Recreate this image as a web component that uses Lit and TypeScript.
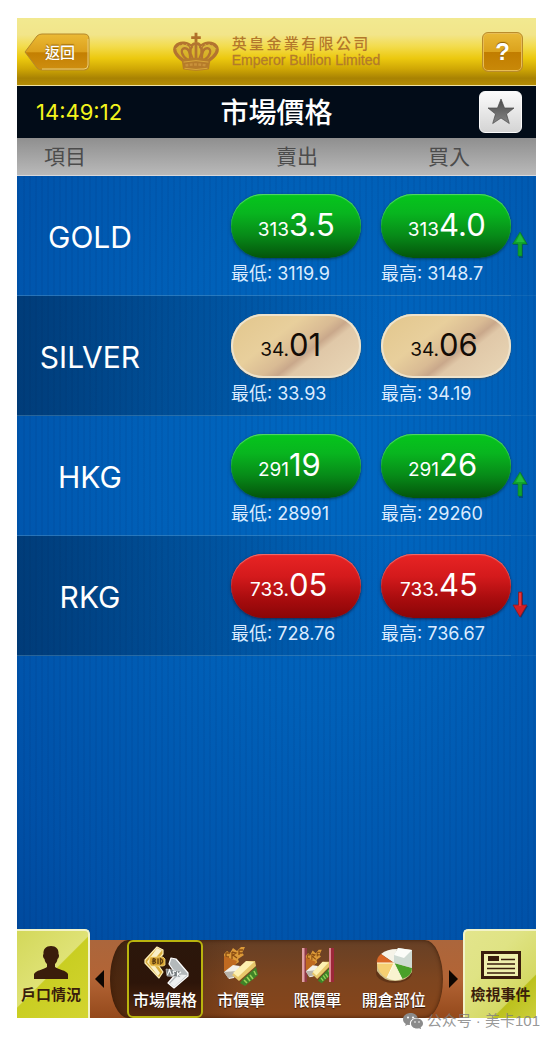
import { LitElement, html, css, svg } from "lit";
import { customElement, property } from "lit/decorators.js";

type Trend = "up" | "down" | "flat";

interface Quote {
  name: string;
  sell: [string, string];
  buy: [string, string];
  low: string;
  high: string;
  trend: Trend;
}

const QUOTES: Quote[] = [
  { name: "GOLD", sell: ["313", "3.5"], buy: ["313", "4.0"], low: "3119.9", high: "3148.7", trend: "up" },
  { name: "SILVER", sell: ["34.", "01"], buy: ["34.", "06"], low: "33.93", high: "34.19", trend: "flat" },
  { name: "HKG", sell: ["291", "19"], buy: ["291", "26"], low: "28991", high: "29260", trend: "up" },
  { name: "RKG", sell: ["733.", "05"], buy: ["733.", "45"], low: "728.76", high: "736.67", trend: "down" },
];

const crown = html`<svg class="crown" viewBox="0 0 48 40" width="46" height="40" aria-hidden="true">
  <path d="M10 29C3 24 0 18 3 13c4-5 12-4 17-1h8c5-3 13-4 17 1c3 5 0 11-7 16z" fill="#c79a2c" opacity=".55"/>
  <path d="M22.500 0h3v3.500H29v3h-3.500V10h-3V6.500H19v-3h3.500z" fill="#b0702a"/>
  <g fill="none" stroke="#b37430" stroke-linecap="round">
    <path d="M11 29C3 24 0 18 3 14c4-5 13-4 16 1M37 29c8-5 11-11 8-15c-4-5-13-4-16 1" stroke-width="3.400"/>
    <path d="M15 28c-6-4-8-11-3-12c5 0 6 6 6 12M33 28c6-4 8-11 3-12c-5 0-6 6-6 12" stroke-width="2.400"/>
    <path d="M18 20c0-6 2-9 6-9s6 3 6 9M24 13v15" stroke-width="2.800"/>
    <path d="M18 20l3 8M30 20l-3 8" stroke-width="2"/>
  </g>
  <path d="M3 17c4-6 12-6 16-2M45 17c-4-6-12-6-16-2" fill="none" stroke="#d9b040" stroke-width="1" stroke-dasharray="1.500 2.500"/>
  <path d="M9 28q15-4 30 0l-1.500 10q-13.500 3-27 0z" fill="#b57b2a"/>
  <path d="M11 30.500q13-3 26 0M12 37q12 2.500 24 0" fill="none" stroke="#d9a93c" stroke-width="1"/>
  <path d="M13 34q11-2 22 0" fill="none" stroke="#c9913a" stroke-width="2.500" stroke-dasharray="3 1.500"/>
</svg>`;

const star = html`<svg viewBox="0 0 28 28" width="28" height="28" aria-hidden="true">
  <defs><linearGradient id="sg" x1="0" y1="0" x2="0" y2="1">
    <stop offset="0" stop-color="#4c4c4c"/><stop offset="1" stop-color="#858585"/>
  </linearGradient></defs>
  <path d="M14 1l3.500 9h9.500l-7.500 6 2.800 9.500L14 20l-8.300 5.500L8.500 16 1 10h9.500z" fill="url(#sg)" stroke="#4a4a4a" stroke-width=".7"/>
</svg>`;

const trendArrow = (trend: Trend) =>
  trend === "flat"
    ? html``
    : html`<svg class="trend" viewBox="0 0 18 28" width="18" height="28" role="img" aria-label=${trend === "up" ? "升" : "跌"}>
        ${trend === "up"
          ? svg`<path d="M10 2l7 12h-5v13h-4V14H2z" fill="#013f55" opacity=".55"/>
              <path d="M9 1l7 12h-5v12H7V13H1.500z" fill="#10a42c" stroke="#087a2a" stroke-width=".6"/>
              <path d="M9 3l4.500 8H5z" fill="#22bd3c"/>`
          : svg`<path d="M8 2h4v13h5l-7 12-7-12h5z" fill="#12264f" opacity=".6"/>
              <path d="M7.500 1h3.500v13h5L9 26 2 14h5.500z" fill="#d21f24" stroke="#8b1420" stroke-width=".7"/>
              <path d="M9 2v13" stroke="#f0545a" stroke-width="1"/>`}
      </svg>`;

const bidAskIcon = html`<svg viewBox="0 0 48 44" width="48" height="44" aria-hidden="true">
  <path d="M16 2l6 3v4l-7 8 7 10-4 6L4 18v-3z" fill="#d9ae3f" stroke="#fff0b8" stroke-width="1.200" stroke-linejoin="round"/>
  <path d="M16 3l5 2.500L11 17l8 11-2 3L6 17z" fill="#f8efc8"/>
  <path d="M9 12h13l2 2v6l-2 1H10l-2-3z" fill="#d6a332" stroke="#f6dd86" stroke-width=".8"/>
  <path d="M12 13.500v5.500M12 13.500q4.500 1 .5 2.700q4.500 1-.5 2.800M17 13.500v5.500M19.500 13.500q4.500 2.700 0 5.500z" fill="none" stroke="#5e3d10" stroke-width="1.300"/>
  <path d="M30 13l5 1 12 14v3L33 43l-6-5 8-9-7-10z" fill="#b4b9bb" stroke="#fff" stroke-width="1.200" stroke-linejoin="round"/>
  <path d="M46 30L33 42l-4-3.500 9-9z" fill="#eef0f0"/>
  <path d="M25 24l14 2 1 6-14-1z" fill="#777d80" stroke="#d7dada" stroke-width=".6"/>
  <path d="M26.500 30l2-5 2 5.500M35 26.500q-4-1-2.500 1.200t-1.500 2.500M36.500 26.500v5M40 27l-3 2 3 2.500" fill="none" stroke="#f6f8f8" stroke-width="1.200"/>
</svg>`;

const orderShape = svg`
  <path d="M5 9l3-3 3 2 3-5 4 3 4-4h4l-3 6 2 2-6 4 1 3-14 9z" fill="#dc9a38"/>
  <path d="M7 8v7M7 8h4M7 12h3M13 7v7M13 7l4 1-3 2 4 3M20 5v5M20 5h4M20 8h3" fill="none" stroke="#8a4d12" stroke-width="1.300"/>
  <path d="M5 11l13 5-4 9-9 1z" fill="#c06a20"/>
  <path d="M5 27l9-7 7 1-6 12-5 1z" fill="#f2f0e9"/>
  <path d="M5 27l4 6 6-1 3-6z" fill="#b8b4aa"/>
  <path d="M13 30l15-14h8l1 5-17 15z" fill="#e7c76a"/>
  <path d="M14 28l13-12 8 1-16 15z" fill="#fdf0b1"/>
  <path d="M24 34l13-12 2 8-13 11-5-3z" fill="#3f8428"/>
  <path d="M25 35l3 3M28 32l3 4M31 30l3 4M35 26l2 4" stroke="#9bd058" stroke-width="1.600"/>`;

const marketOrderIcon = html`<svg viewBox="0 0 44 44" width="44" height="44" aria-hidden="true">${orderShape}</svg>`;

const limitOrderIcon = html`<svg viewBox="0 0 44 44" width="44" height="44" aria-hidden="true">
  <path d="M6 3h5v34H6z" fill="#8f3944"/><path d="M6 3h2.500v34H6z" fill="#df9fa4"/>
  <g transform="translate(6 3) scale(.76 .86)">${orderShape}</g>
  <path d="M33 3h5v34h-5z" fill="#9c2739"/><path d="M33 3h2v34h-2z" fill="#dc8790"/>
</svg>`;

const pieIcon = html`<svg viewBox="0 0 44 44" width="44" height="44" aria-hidden="true">
  <ellipse cx="22" cy="28" rx="18" ry="10" fill="#4f2a12" opacity=".6"/>
  <path d="M5 18v8q6 10 18 10t17-9v-9z" fill="#cfc08a"/>
  <path d="M22 18L9 9q6-5 16-5z" fill="#f5f3e8"/>
  <path d="M22 18L5 18q-1-5 4-9z" fill="#d96826"/>
  <path d="M22 18l-7 15Q6 29 5 18z" fill="#f5cf72"/>
  <path d="M22 18l8 16q-8 3-15-1z" fill="#f9f3d0"/>
  <path d="M22 18l18 5q0 8-10 11z" fill="#4aa02a"/>
  <path d="M22 10l4-7 14 2v18l-18-5z" fill="#cfdad3"/>
  <path d="M22 10l4-7 14 2-8 8z" fill="#fbfcf8"/>
  <path d="M22 18L5 18M22 18l-7 15M22 18l8 16" stroke="#fffbe2" stroke-width="1"/>
</svg>`;

const personIcon = html`<svg viewBox="0 0 36 36" width="36" height="36" aria-hidden="true">
  <path d="M18 1c5 0 8 3 7.500 8 1 1 .5 4-1 5-.5 3-1.500 4-2.500 5v3c4 3 11 3 13 7v5H1v-5c2-4 9-4 13-7v-3c-1-1-2-2-2.500-5-1.500-1-2-4-1-5C10 4 13 1 18 1z" fill="#3a1d0b"/>
</svg>`;

const newsIcon = html`<svg viewBox="0 0 40 28" width="40" height="28" aria-hidden="true">
  <path d="M1.500 1.500h37v25h-37z" fill="#efefac" stroke="#3a1d0b" stroke-width="3"/>
  <path d="M7 5h11v5H7z" fill="#3a1d0b"/>
  <path d="M20 8.500h14M6 13h28M6 17.500h28M6 22h28" stroke="#3a1d0b" stroke-width="1.600"/>
</svg>`;

@customElement("brand-header")
export class BrandHeader extends LitElement {
  static styles = css`
    :host {
      display: grid;
      grid-template-columns: 1fr auto 1fr;
      align-items: center;
      height: 68px;
      box-sizing: border-box;
      padding: 0 13px 0 7px;
      border-bottom: 1px solid #efe2a0;
      background: linear-gradient(#f2e990 0%, #f2e58a 25%, #f3dc4e 42%, #ecc90f 60%, #cfa705 76%, #a88203 90%, #b48d05 100%);
    }
    button {
      border: 0;
      padding: 0;
      font: inherit;
      color: #fff;
      cursor: pointer;
    }
    .back {
      position: relative;
      width: 66px;
      height: 38px;
      background: none;
      font-size: 15px;
      font-weight: 500;
      text-shadow: 0 -1px 1px #8a5a00;
    }
    .shape {
      position: absolute;
      inset: 0;
    }
    .label {
      position: relative;
      padding-left: 6px;
    }
    .brand {
      display: flex;
      align-items: center;
      gap: 13px;
      padding-left: 6px;
      color: #b3782c;
    }
    .zh {
      padding-right: 12px;
      font-size: 15px;
      line-height: 17px;
      font-weight: 500;
      text-align-last: justify;
    }
    .en {
      font: 14px/16px "Liberation Sans", Arial, sans-serif;
      -webkit-text-stroke: 0.3px #b3802a;
    }
    .help {
      justify-self: end;
      width: 41px;
      height: 40px;
      border: 1px solid #b98c2c;
      border-radius: 6px;
      background: linear-gradient(#e9b936, #dba21c 50%, #c17d00 51%, #c98909);
      box-shadow: inset 0 0 0 1px #e8bd55;
      font: bold 24px/36px "Liberation Sans", Arial, sans-serif;
      text-shadow: 0 -1px 1px #8a5a00;
    }
  `;
  render() {
    return html`
      <button class="back">
        <svg class="shape" viewBox="0 0 66 38" width="66" height="38" aria-hidden="true">
          <defs>
            <linearGradient id="bg" x1="0" y1="0" x2="0" y2="1">
              <stop offset="0" stop-color="#ebba35" /><stop offset=".5" stop-color="#dca01c" />
              <stop offset=".52" stop-color="#c37f02" /><stop offset="1" stop-color="#cf8f10" />
            </linearGradient>
          </defs>
          <path d="M1 19L13 3q2-2 5-2h42q5 0 5 5v26q0 5-5 5H18q-3 0-5-2z" fill="url(#bg)" stroke="#b4882a" />
          <path d="M18 36h42q4 0 4-4V6" fill="none" stroke="#e9cf7a" />
        </svg>
        <span class="label">返回</span>
      </button>
      <div class="brand">
        ${crown}
        <div>
          <div class="zh">英皇金業有限公司</div>
          <div class="en">Emperor Bullion Limited</div>
        </div>
      </div>
      <button class="help" aria-label="說明">?</button>
    `;
  }
}

@customElement("price-table")
export class PriceTable extends LitElement {
  @property({ attribute: false }) quotes: Quote[] = [];

  static styles = css`
    :host {
      display: block;
    }
    table {
      width: 100%;
      table-layout: fixed;
      border-collapse: separate;
      border-spacing: 0;
    }
    .col-sell {
      width: 150px;
    }
    .col-buy {
      width: 130px;
    }
    .col-trend {
      width: 25px;
    }
    th,
    td {
      padding: 0;
    }
    thead th {
      height: 37px;
      border-bottom: 1px solid #d9d9dc;
      background: linear-gradient(#8f8f8f, #b9b9b9);
      color: #4c4c4c;
      font-size: 21px;
      line-height: 36px;
      font-weight: 400;
    }
    thead .item {
      padding-left: 27px;
      text-align: left;
    }
    thead .sell {
      padding-right: 18px;
    }
    thead .buy {
      padding-left: 6px;
    }
    tbody tr {
      height: 120px;
    }
    tbody tr:nth-child(even) {
      background: linear-gradient(90deg, rgba(0, 30, 60, 0.46), rgba(0, 30, 60, 0.28) 28%, rgba(0, 30, 60, 0) 72%);
    }
    tbody th,
    tbody td {
      box-sizing: border-box;
      height: 120px;
      border-bottom: 1px solid rgba(100, 160, 200, 0.4);
    }
    tbody td:last-child {
      border-color: rgba(100, 160, 200, 0.15);
    }
    .name {
      padding: 2px 68px 0 0;
      color: #fff;
      font-size: 30px;
      font-weight: 400;
    }
    td {
      vertical-align: top;
    }
    .quote {
      padding-top: 18px;
    }
    .pill {
      display: grid;
      grid-template-columns: 58px 1fr;
      align-items: baseline;
      width: 130px;
      height: 64px;
      box-sizing: border-box;
      padding: 0;
      border: 0;
      border-radius: 32px;
      font: inherit;
      line-height: 62px;
      color: #fff;
      cursor: pointer;
    }
    .up {
      background: linear-gradient(#05c61c, #08b51f 30%, #078a18 65%, #04540b);
      box-shadow: inset 0 1px 1px #56d968, 0 1px 3px #003a5c;
    }
    .down {
      background: linear-gradient(#e82424, #d41a1c 35%, #a80c0e 70%, #8a0507);
      box-shadow: inset 0 1px 1px #f07070, 0 1px 3px #16224a;
    }
    .flat {
      background: linear-gradient(142deg, #e2c68c, #e8cf9c 35%, #d9bb94 52%, #c9a88b 59%, #e0c8a8 65%, #ead8b8);
      box-shadow: inset 0 0 0 2px #eee3cc, 0 1px 2px #33506b;
      color: #120b06;
    }
    .minor {
      text-align: right;
      font-size: 19px;
    }
    .major {
      text-align: left;
      font-size: 31px;
    }
    .range {
      margin-top: 3px;
      font-size: 18px;
      line-height: 25px;
      color: #dcecff;
      white-space: nowrap;
    }
    .trend-cell {
      padding-top: 55px;
    }
    .trend {
      display: block;
    }
  `;

  private price([minor, major]: [string, string], trend: Trend) {
    return html`<button class="pill ${trend}"><span class="minor">${minor}</span><span class="major">${major}</span></button>`;
  }

  render() {
    return html`<table>
      <colgroup>
        <col /><col class="col-sell" /><col class="col-buy" /><col class="col-trend" />
      </colgroup>
      <thead>
        <tr>
          <th class="item" scope="col">項目</th>
          <th class="sell" scope="col">賣出</th>
          <th class="buy" scope="col">買入</th>
          <th></th>
        </tr>
      </thead>
      <tbody>
        ${this.quotes.map(
          (q) => html`<tr>
            <th class="name" scope="row">${q.name}</th>
            <td class="quote">${this.price(q.sell, q.trend)}<div class="range">最低: ${q.low}</div></td>
            <td class="quote">${this.price(q.buy, q.trend)}<div class="range">最高: ${q.high}</div></td>
            <td class="trend-cell">${trendArrow(q.trend)}</td>
          </tr>`
        )}
      </tbody>
    </table>`;
  }
}

@customElement("tab-dock")
export class TabDock extends LitElement {
  static styles = css`
    :host {
      display: flex;
      align-items: flex-end;
    }
    button {
      border: 0;
      padding: 0;
      font: inherit;
      background: none;
      cursor: pointer;
    }
    .side {
      display: flex;
      flex-direction: column;
      align-items: center;
      justify-content: flex-end;
      gap: 4px;
      width: 73px;
      height: 89px;
      box-sizing: border-box;
      padding-bottom: 13px;
      color: #3a1d0b;
      font-size: 15px;
      line-height: 20px;
      font-weight: 700;
      white-space: nowrap;
    }
    .account {
      padding-right: 3px;
      border-top: 2px solid #f2f3c8;
      border-right: 2px solid #f2f3c8;
      border-radius: 0 5px 0 0;
      background: linear-gradient(135deg, #d3d85a, #dfe276 48%, #c9ce22 49%, #d3d431);
    }
    .events {
      border-top: 2px solid #f2f3c8;
      border-left: 2px solid #f2f3c8;
      border-radius: 5px 0 0 0;
      background: linear-gradient(135deg, #e3e58c, #dfe384 35%, #d5d964 72%, #bcc11c 73%, #cccf3c);
    }
    .events svg {
      margin-bottom: 2px;
    }
    .strip {
      display: flex;
      flex: 1;
      min-width: 0;
      height: 78px;
      background: linear-gradient(#ab663c, #b36435 50%, #94491b);
    }
    .step {
      display: grid;
      place-items: center;
      width: 20px;
    }
    .items {
      flex: 1;
      display: grid;
      grid-template-columns: repeat(4, 1fr);
      box-sizing: border-box;
      padding: 0 11px 0 17px;
      border-radius: 18px / 50%;
      background:
        linear-gradient(90deg, rgba(30, 12, 0, 0.55), rgba(30, 12, 0, 0) 40%),
        linear-gradient(#664026, #7d451f 50%, #87451a);
      box-shadow: inset 0 0 4px #3c1c08;
    }
    .tab {
      display: flex;
      flex-direction: column;
      align-items: center;
      justify-content: flex-end;
      min-width: 0;
      box-sizing: border-box;
      padding-bottom: 5px;
      border: 2px solid transparent;
      border-radius: 6px;
      color: #fff;
      font-size: 16px;
      line-height: 22px;
      font-weight: 500;
      white-space: nowrap;
      text-shadow: 0 1px 1px #2c1407;
    }
    .tab[aria-pressed="true"] {
      border-color: #b9b40e;
      background: linear-gradient(#2b170b, #2d1509 55%, #54290f);
    }
  `;

  private tabs = [
    { label: "市場價格", icon: bidAskIcon },
    { label: "市價單", icon: marketOrderIcon },
    { label: "限價單", icon: limitOrderIcon },
    { label: "開倉部位", icon: pieIcon },
  ];

  render() {
    return html`
      <button class="side account">${personIcon}<span>戶口情況</span></button>
      <div class="strip">
        <button class="step" aria-label="上一頁">
          <svg viewBox="0 0 10 18" width="10" height="18"><path d="M0 9l9-9v18z" fill="#0d0602" /></svg>
        </button>
        <div class="items">
          ${this.tabs.map(
            (t, i) => html`<button class="tab" aria-pressed=${i === 0 ? "true" : "false"}>${t.icon}<span>${t.label}</span></button>`
          )}
        </div>
        <button class="step" aria-label="下一頁">
          <svg viewBox="0 0 10 18" width="10" height="18"><path d="M10 9L1 0v18z" fill="#0d0602" /></svg>
        </button>
      </div>
      <button class="side events">${newsIcon}<span>檢視事件</span></button>
    `;
  }
}

@customElement("app-root")
export class AppRoot extends LitElement {
  static styles = css`
    :host {
      position: relative;
      display: flex;
      flex-direction: column;
      min-height: 100vh;
      box-sizing: border-box;
      padding: 18px 20px 25px 17px;
      background: #fff;
      font-family: Inter, "Noto Sans CJK TC", sans-serif;
    }
    .titlebar {
      display: grid;
      grid-template-columns: 1fr auto 1fr;
      align-items: center;
      height: 52px;
      box-sizing: border-box;
      padding: 0 14px;
      background: #020c18;
    }
    .clock {
      padding-left: 5px;
      color: #f4f41c;
      font-size: 22px;
    }
    .title {
      margin: 0;
      padding-top: 2px;
      color: #fff;
      font-size: 28px;
      line-height: 40px;
      font-weight: 500;
    }
    .favourite {
      justify-self: end;
      display: grid;
      place-items: center;
      width: 43px;
      height: 42px;
      padding: 0;
      border: 1px solid #fafafa;
      border-radius: 6px;
      background: linear-gradient(#fbfbfb, #d4d4d4);
      cursor: pointer;
    }
    .board {
      flex: 1;
      display: flex;
      flex-direction: column;
      justify-content: space-between;
      background:
        repeating-linear-gradient(90deg, rgba(0, 30, 90, 0.07) 0 2px, rgba(0, 30, 90, 0) 2px 6px),
        radial-gradient(90% 75% at 62% 35%, #0068c2, #0060b8 40%, #0051a8 85%, #004a9e);
    }
    .credit {
      position: absolute;
      right: 16px;
      bottom: 12px;
      display: flex;
      align-items: center;
      gap: 4px;
      color: rgba(125, 125, 125, 0.8);
      font: 15px/20px "Liberation Sans", "Noto Sans CJK SC", sans-serif;
      white-space: nowrap;
    }
  `;

  render() {
    return html`
      <brand-header></brand-header>
      <div class="titlebar">
        <time class="clock">14:49:12</time>
        <h1 class="title">市場價格</h1>
        <button class="favourite" aria-label="收藏">${star}</button>
      </div>
      <main class="board">
        <price-table .quotes=${QUOTES}></price-table>
        <tab-dock></tab-dock>
      </main>
      <div class="credit">
        <svg viewBox="0 0 20 16" width="20" height="16" aria-hidden="true">
          <path d="M7.500 0C3.300 0 0 2.800 0 6.200c0 2 1 3.600 2.800 4.700L2 13l2.700-1.300c.8.200 1.400.3 2.300.3-1-4 2.500-7.300 7.700-7.200C14 2 11 0 7.500 0z" fill="#8b8b8b" />
          <path d="M14 5.500c-3.500 0-6 2.200-6 5s2.500 5 6 5c.7 0 1.400-.1 2-.3l2.200 1-.6-1.800c1.500-1 2.400-2.300 2.400-3.900 0-2.800-2.600-5-6-5z" fill="#8b8b8b" />
          <g fill="#fff"><circle cx="5" cy="4.500" r="1" /><circle cx="10" cy="4.500" r="1" /><circle cx="12" cy="9" r=".8" /><circle cx="16" cy="9" r=".8" /></g>
        </svg>
        <span>公众号 · 美卡101</span>
      </div>
    `;
  }
}
